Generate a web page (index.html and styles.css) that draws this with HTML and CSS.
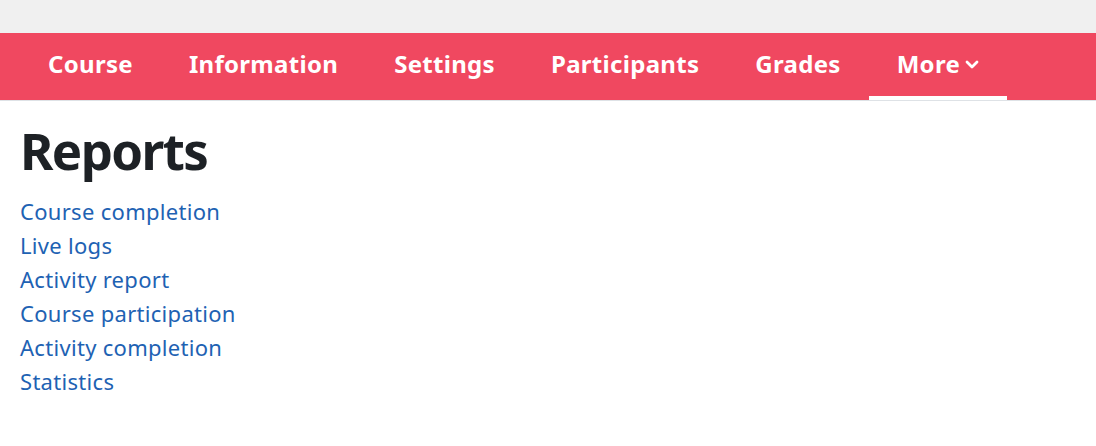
FILE: index.html
```html
<!DOCTYPE html>
<html lang="en">
<head>
<meta charset="utf-8">
<title>Reports</title>
<link rel="stylesheet" href="styles.css">
</head>
<body>
<div class="topbar"></div>
<nav class="secnav">
  <ul class="secnav-list">
    <li class="secnav-item"><a href="#">Course</a></li>
    <li class="secnav-item"><a href="#">Information</a></li>
    <li class="secnav-item"><a href="#">Settings</a></li>
    <li class="secnav-item"><a href="#">Participants</a></li>
    <li class="secnav-item"><a href="#">Grades</a></li>
    <li class="secnav-item active"><a href="#">More
      <svg class="chev" width="14" height="10" viewBox="0 0 14 10" aria-hidden="true"><path d="M2 2 L7 7 L12 2" fill="none" stroke="#fff" stroke-width="2.8" stroke-linecap="round" stroke-linejoin="round"/></svg></a></li>
  </ul>
</nav>
<main class="content">
  <h1 class="title">Reports</h1>
  <ul class="reports">
    <li><a href="#">Course completion</a></li>
    <li><a href="#">Live logs</a></li>
    <li><a href="#">Activity report</a></li>
    <li><a href="#">Course participation</a></li>
    <li><a href="#">Activity completion</a></li>
    <li><a href="#">Statistics</a></li>
  </ul>
</main>
</body>
</html>
```
FILE: styles.css
```css
* { box-sizing: border-box; }
html, body { margin: 0; padding: 0; background: #fff; }
body { font-family: "Noto Sans", "Open Sans", sans-serif; color: #1d2125; }
.topbar { height: 33px; background: #f0f0f0; }
.secnav { background: #f04860; border-bottom: 1px solid #dee2e6; }
.secnav-list { list-style: none; margin: 0; padding: 0 0 0 20px; display: flex; height: 67px; }
.secnav-item { display: flex; }
.secnav-item a { display: flex; align-items: center; gap: 5px; padding: 0 28px 6px; color: #fff; text-decoration: none; font-weight: 700; font-size: 24px; letter-spacing: 0.3px; }
.secnav-item.active a { box-shadow: inset 0 -4px 0 #fff; }
.chev { display: block; margin-top: 3px; }
.content { padding: 0 20px; }
.title { margin: 19px 0 13px; font-size: 51px; font-weight: 700; line-height: 1.2; letter-spacing: -1.6px; color: #1d2125; }
.reports { list-style: none; margin: 0; padding: 0; }
.reports li { line-height: 34px; font-size: 22px; letter-spacing: 0.3px; }
.reports a { color: #1e62b3; text-decoration: none; }
```
